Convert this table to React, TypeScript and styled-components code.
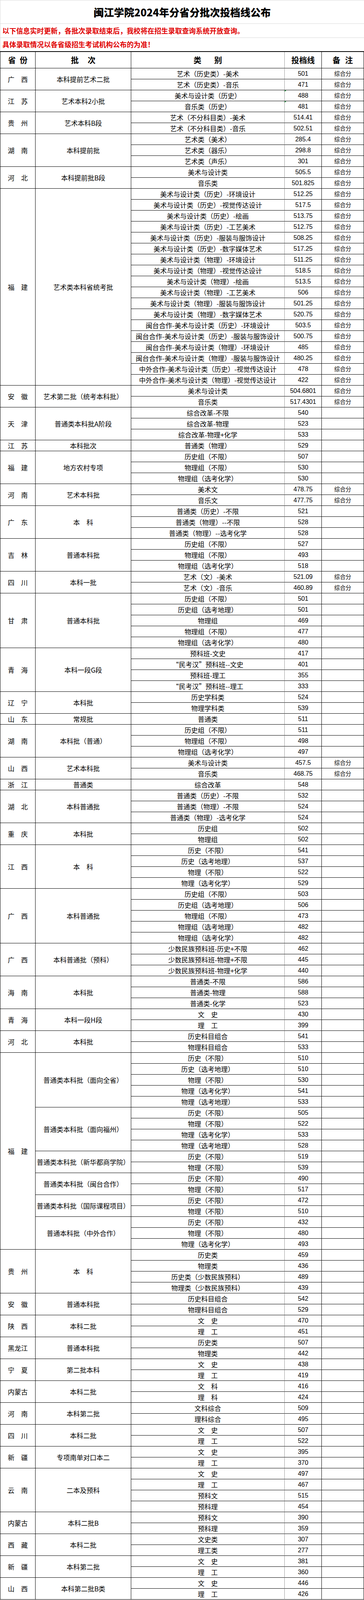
import React from "react";
import styled, { createGlobalStyle } from "styled-components";

type Row = [string, string, string?, boolean?];
type Batch = { name: string; rows: Row[] };
type Group = { province: string; batches: Batch[] };

const S = "综合分";

const groups: Group[] = [
  { province: "广　西", batches: [{ name: "本科提前艺术二批", rows: [["艺术（历史类）-美术", "501", S], ["艺术（历史类）-音乐", "471", S]] }] },
  { province: "江　苏", batches: [{ name: "艺术本科2小批", rows: [["美术与设计类（历史）", "488", S, true], ["音乐类（历史）", "481", S, true]] }] },
  { province: "贵　州", batches: [{ name: "艺术本科B段", rows: [["艺术（不分科目类）-美术", "514.41", S], ["艺术（不分科目类）-音乐", "502.51", S]] }] },
  { province: "湖　南", batches: [{ name: "本科提前批", rows: [["艺术类（美术）", "285.4", S], ["艺术类（器乐）", "298.8", S], ["艺术类（声乐）", "301", S]] }] },
  { province: "河　北", batches: [{ name: "本科提前批B段", rows: [["美术与设计类", "505.5", S], ["音乐类", "501.825", S]] }] },
  {
    province: "福　建",
    batches: [
      {
        name: "艺术类本科省统考批",
        rows: [
          ["美术与设计类（历史）-环境设计", "512.25", S],
          ["美术与设计类（历史）-视觉传达设计", "517.5", S],
          ["美术与设计类（历史）-绘画", "513.75", S],
          ["美术与设计类（历史）-工艺美术", "512.75", S],
          ["美术与设计类（历史）-服装与服饰设计", "508.25", S],
          ["美术与设计类（历史）-数字媒体艺术", "517.25", S],
          ["美术与设计类（物理）-环境设计", "511.25", S],
          ["美术与设计类（物理）-视觉传达设计", "518.5", S],
          ["美术与设计类（物理）-绘画", "513.5", S],
          ["美术与设计类（物理）-工艺美术", "506", S],
          ["美术与设计类（物理）-服装与服饰设计", "501.25", S],
          ["美术与设计类（物理）-数字媒体艺术", "520.75", S],
          ["闽台合作-美术与设计类（历史）-环境设计", "503.5", S],
          ["闽台合作-美术与设计类（历史）-服装与服饰设计", "500.75", S],
          ["闽台合作-美术与设计类（物理）-环境设计", "485", S],
          ["闽台合作-美术与设计类（物理）-服装与服饰设计", "480.25", S],
          ["中外合作-美术与设计类（历史）-视觉传达设计", "478", S],
          ["中外合作-美术与设计类（物理）-视觉传达设计", "422", S],
        ],
      },
    ],
  },
  { province: "安　徽", batches: [{ name: "艺术第二批（统考本科批）", rows: [["美术与设计类", "504.6801", S], ["音乐类", "517.4301", S]] }] },
  { province: "天　津", batches: [{ name: "普通类本科批A阶段", rows: [["综合改革-不限", "540"], ["综合改革-物理", "523"], ["综合改革-物理+化学", "533"]] }] },
  { province: "江　苏", batches: [{ name: "本科批次", rows: [["普通类（物理）", "529"]] }] },
  { province: "福　建", batches: [{ name: "地方农村专项", rows: [["历史组（不限）", "507"], ["物理组（不限）", "530"], ["物理组（选考化学）", "530"]] }] },
  { province: "河　南", batches: [{ name: "艺术本科批", rows: [["美术文", "478.75", S], ["音乐文", "477.75", S]] }] },
  { province: "广　东", batches: [{ name: "本　科", rows: [["普通类（历史）-不限", "521"], ["普通类（物理）--不限", "528"], ["普通类（物理）--选考化学", "528"]] }] },
  { province: "吉　林", batches: [{ name: "普通本科批", rows: [["历史组（不限）", "527"], ["物理组（不限）", "493"], ["物理组（选考化学）", "518"]] }] },
  { province: "四　川", batches: [{ name: "本科一批", rows: [["艺术（文）-美术", "521.09", S], ["艺术（文）-音乐", "460.89", S]] }] },
  {
    province: "甘　肃",
    batches: [{ name: "普通本科批", rows: [["历史组（不限）", "501"], ["历史组（选考地理）", "501"], ["物理组", "469"], ["物理组（不限）", "477"], ["物理组（选考化学）", "480"]] }],
  },
  {
    province: "青　海",
    batches: [{ name: "本科一段G段", rows: [["预科班-文史", "417"], ["“民考汉”预科班--文史", "401"], ["预科班-理工", "355"], ["“民考汉”预科班--理工", "333"]] }],
  },
  { province: "辽　宁", batches: [{ name: "本科批", rows: [["历史学科类", "524"], ["物理学科类", "539"]] }] },
  { province: "山　东", batches: [{ name: "常规批", rows: [["普通类", "511"]] }] },
  { province: "湖　南", batches: [{ name: "本科批（普通）", rows: [["历史组（不限）", "511"], ["物理组（不限）", "498"], ["物理组（选考化学）", "497"]] }] },
  { province: "山　西", batches: [{ name: "艺术本科批", rows: [["美术与设计类", "457.5", S], ["音乐类", "468.75", S]] }] },
  { province: "浙　江", batches: [{ name: "普通类", rows: [["综合改革", "548"]] }] },
  { province: "湖　北", batches: [{ name: "本科普通批", rows: [["普通类（历史）-不限", "532"], ["普通类（物理）-不限", "524"], ["普通类（物理）-选考化学", "524"]] }] },
  { province: "重　庆", batches: [{ name: "本科批", rows: [["历史组", "502"], ["物理组", "502"]] }] },
  { province: "江　西", batches: [{ name: "本　科", rows: [["历史（不限）", "541"], ["历史（选考地理）", "537"], ["物理（不限）", "522"], ["物理（选考化学）", "529"]] }] },
  {
    province: "广　西",
    batches: [{ name: "本科普通批", rows: [["历史组（不限）", "503"], ["历史组（选考地理）", "506"], ["物理组（不限）", "473"], ["物理组（选考地理）", "482"], ["物理组（选考化学）", "482"]] }],
  },
  {
    province: "广　西",
    batches: [{ name: "本科普通批（预科）", rows: [["少数民族预科班-历史+不限", "462"], ["少数民族预科班-物理+不限", "445"], ["少数民族预科班-物理+化学", "440"]] }],
  },
  { province: "海　南", batches: [{ name: "本科批", rows: [["普通类-不限", "586"], ["普通类-物理", "588"], ["普通类-化学", "523"]] }] },
  { province: "青　海", batches: [{ name: "本科一段H段", rows: [["文　史", "430"], ["理　工", "399"]] }] },
  { province: "河　北", batches: [{ name: "本科批", rows: [["历史科目组合", "541"], ["物理科目组合", "533"]] }] },
  {
    province: "福　建",
    batches: [
      { name: "普通类本科批（面向全省）", rows: [["历史（不限）", "510"], ["历史（选考地理）", "510"], ["物理（不限）", "530"], ["物理（选考化学）", "541"], ["物理（选考地理）", "533"]] },
      { name: "普通类本科批（面向福州）", rows: [["历史（不限）", "505"], ["物理（不限）", "522"], ["物理（选考化学）", "533"], ["物理（选考地理）", "528"]] },
      { name: "普通类本科批（新华都商学院）", rows: [["历史（不限）", "519"], ["物理（不限）", "539"]] },
      { name: "普通类本科批（闽台合作）", rows: [["历史（不限）", "490"], ["物理（不限）", "517"]] },
      { name: "普通类本科批（国际课程项目）", rows: [["历史（不限）", "472"], ["物理（不限）", "510"]] },
      { name: "普通本科批（中外合作）", rows: [["历史（不限）", "432"], ["物理（不限）", "480"], ["物理（选考化学）", "493"]] },
    ],
  },
  { province: "贵　州", batches: [{ name: "本　科", rows: [["历史类", "459"], ["物理类", "436"], ["历史类（少数民族预科）", "489"], ["物理类（少数民族预科）", "439"]] }] },
  { province: "安　徽", batches: [{ name: "普通本科批", rows: [["历史科目组合", "542"], ["物理科目组合", "529"]] }] },
  { province: "陕　西", batches: [{ name: "本科二批", rows: [["文　史", "470"], ["理　工", "451"]] }] },
  { province: "黑龙江", batches: [{ name: "普通本科批", rows: [["历史类", "507"], ["物理类", "442"]] }] },
  { province: "宁　夏", batches: [{ name: "第二批本科", rows: [["文　史", "438"], ["理　工", "419"]] }] },
  { province: "内蒙古", batches: [{ name: "本科二批", rows: [["文　科", "416"], ["理　科", "424"]] }] },
  { province: "河　南", batches: [{ name: "本科第二批", rows: [["文科综合", "509"], ["理科综合", "495"]] }] },
  { province: "四　川", batches: [{ name: "本科二批", rows: [["文　史", "507"], ["理　工", "522"]] }] },
  { province: "新　疆", batches: [{ name: "专项南单对口本二", rows: [["文　史", "395"], ["理　工", "370"]] }] },
  { province: "云　南", batches: [{ name: "二本及预科", rows: [["文　史", "497"], ["理　工", "467"], ["预科文", "515"], ["预科理", "454"]] }] },
  { province: "内蒙古", batches: [{ name: "本科二批B", rows: [["预科文", "390"], ["预科理", "359"]] }] },
  { province: "西　藏", batches: [{ name: "本科二批", rows: [["文史类", "307"], ["理工类", "277"]] }] },
  { province: "新　疆", batches: [{ name: "本科第二批", rows: [["文　史", "381"], ["理　工", "360"]] }] },
  { province: "山　西", batches: [{ name: "本科第二批B类", rows: [["文　史", "446"], ["理　工", "426"]] }] },
];

const GlobalStyle = createGlobalStyle`
  html, body {
    margin: 0;
    padding: 0;
    background: #fff;
  }
  body {
    font-family: "Noto Sans CJK SC", "Noto Sans", sans-serif;
    color: #000;
  }
  *, *::before, *::after {
    box-sizing: border-box;
  }
`;

const Page = styled.div`
  width: 100%;
`;

const Banner = styled.div`
  border-left: 1px solid #d9d9d9;
  border-top: 1px solid #d9d9d9;
`;

const Title = styled.h1`
  margin: 0;
  height: 60px;
  display: flex;
  align-items: center;
  justify-content: center;
  font-size: 26px;
  font-weight: 900;
  line-height: 1;
  border-bottom: 1px solid #d9d9d9;
`;

const Notice = styled.p<{ $h: number; $line?: boolean }>`
  margin: 0;
  height: ${(p) => p.$h}px;
  display: flex;
  align-items: center;
  padding-left: 5px;
  color: #e00000;
  font-size: 17.7px;
  font-weight: 700;
  line-height: 1;
  border-bottom: ${(p) => (p.$line ? "1px solid #d9d9d9" : "none")};
`;

// the capture window is only ~4096px tall, so rows are 28px to keep every line on screen
const Sheet = styled.div`
  display: grid;
  grid-template-columns: 90px 245px 393px 95px 1fr;
  grid-template-rows: 42px;
  grid-auto-rows: 28px;
  border-top: 2px solid #000;
  border-left: 1px solid #000;
`;

const Cell = styled.div<{ $col: number; $span?: number }>`
  grid-column: ${(p) => p.$col};
  grid-row: span ${(p) => p.$span ?? 1};
  display: flex;
  align-items: center;
  justify-content: center;
  border-right: 1px solid #000;
  border-bottom: 1px solid #000;
  white-space: nowrap;
  font-size: 17px;
  line-height: 1;
  overflow: hidden;
`;

const HeadCell = styled(Cell)<{ $grey?: boolean }>`
  font-size: 20px;
  font-weight: 700;
  border-right-color: ${(p) => (p.$grey ? "#999" : "#000")};
`;

const HeadLabel = styled.span<{ $gap: number }>`
  letter-spacing: ${(p) => p.$gap}px;
  margin-right: -${(p) => p.$gap}px;
`;

const ProvinceCell = styled(Cell)``;

const BatchCell = styled(Cell)``;

const CategoryCell = styled(Cell)`
  border-right-color: #999;
`;

const ScoreCell = styled(Cell)<{ $flag?: boolean }>`
  position: relative;
  font-family: "Liberation Sans", Arial, sans-serif;
  font-size: 16px;
  &::before {
    content: "";
    display: ${(p) => (p.$flag ? "block" : "none")};
    position: absolute;
    left: 0;
    top: 0;
    border-top: 4px solid #1f8a3a;
    border-right: 4px solid transparent;
  }
`;

const RemarkCell = styled(Cell)`
  font-size: 14.5px;
`;

function renderGroup(g: Group, gi: number) {
  const total = g.batches.reduce((n, b) => n + b.rows.length, 0);
  const out: React.ReactNode[] = [];
  g.batches.forEach((b, bi) => {
    b.rows.forEach((r, ri) => {
      const [cat, score, remark, flag] = r;
      const key = `${gi}-${bi}-${ri}`;
      if (bi === 0 && ri === 0) {
        out.push(<ProvinceCell key={`${key}p`} $col={1} $span={total}>{g.province}</ProvinceCell>);
      }
      if (ri === 0) {
        out.push(<BatchCell key={`${key}b`} $col={2} $span={b.rows.length}>{b.name}</BatchCell>);
      }
      out.push(<CategoryCell key={`${key}c`} $col={3}>{cat}</CategoryCell>);
      out.push(<ScoreCell key={`${key}s`} $col={4} $flag={flag}>{score}</ScoreCell>);
      out.push(<RemarkCell key={`${key}r`} $col={5}>{remark ?? ""}</RemarkCell>);
    });
  });
  return out;
}

export default function App() {
  return (
    <Page>
      <GlobalStyle />
      <Banner>
        <Title>闽江学院2024年分省分批次投档线公布</Title>
        <Notice $h={36} $line>以下信息实时更新，各批次录取结束后，我校将在招生录取查询系统开放查询。</Notice>
        <Notice $h={34}>具体录取情况以各省级招生考试机构公布的为准！</Notice>
      </Banner>
      <Sheet>
        <HeadCell $col={1}><HeadLabel $gap={10}>省份</HeadLabel></HeadCell>
        <HeadCell $col={2}><HeadLabel $gap={23}>批次</HeadLabel></HeadCell>
        <HeadCell $col={3} $grey><HeadLabel $gap={33}>类别</HeadLabel></HeadCell>
        <HeadCell $col={4}><HeadLabel $gap={0}>投档线</HeadLabel></HeadCell>
        <HeadCell $col={5}><HeadLabel $gap={12}>备注</HeadLabel></HeadCell>
        {groups.flatMap((g, gi) => renderGroup(g, gi))}
      </Sheet>
    </Page>
  );
}
